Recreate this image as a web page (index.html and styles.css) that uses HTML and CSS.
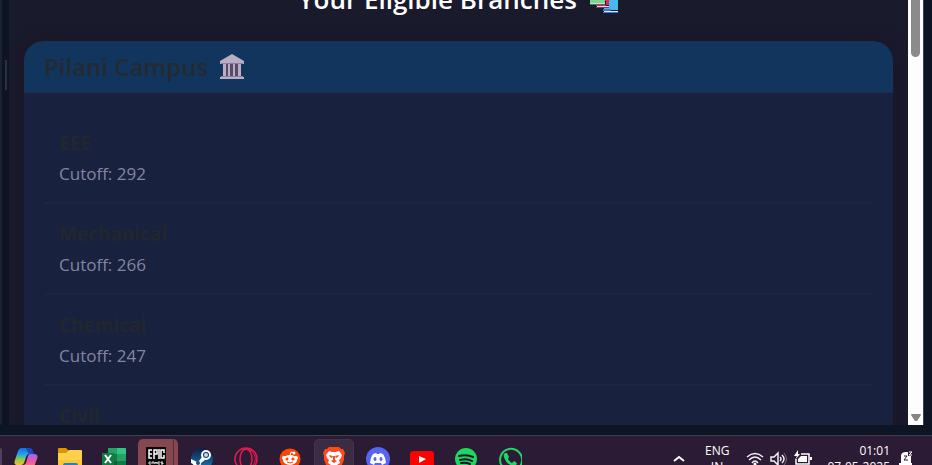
FILE: index.html
```html
<!DOCTYPE html>
<html lang="en">
<head>
<meta charset="utf-8">
<title>Your Eligible Branches</title>
<link rel="stylesheet" href="styles.css">
</head>
<body>
<div class="desktop">
  <div class="panes">
    <div class="side-pane"></div>
    <div class="splitter"><span class="grip"></span></div>
    <main class="page">
      <h1 class="title">Your Eligible Branches
        <svg class="books" viewBox="0 0 30 30" aria-hidden="true">
          <path fill="#3f9d5c" d="M2 1h16v14H2z"/><path fill="#7bd88a" d="M1 1h15v18H1z"/><path fill="#d8d0ec" d="M1 19h15v1H1z"/><path fill="#397a5c" d="M1 20h15v1H1z"/>
          <path fill="#d92b57" d="M12 5h10v16h-5v1H7v-1h10v-4h-1z"/><path fill="#e6dcf0" d="M8 22h14v1H8z"/><path fill="#a52555" d="M7 23h15v1H7z"/>
          <path fill="#48b9ee" d="M20 8h9v18H15v-2h5z"/><path fill="#e1e3fa" d="M15 27h14v1H15z"/><path fill="#4273cf" d="M14 25h8v2h-8zM14 28h15v1H14z"/>
        </svg>
      </h1>
      <section class="card">
        <h2 class="card-head">Pilani Campus
          <svg class="bank" viewBox="0 0 24 26" aria-hidden="true">
            <path fill="#574a68" d="M3 9h18v14H3z"/>
            <path fill="#b8aec3" d="M12 0 24 7v3H0V7zM3 10h3v12H3zM8 10h2v12H8zM13 10h2v12h-2zM18 10h3v12h-3zM1 22h22v1H1zM0 23h24v2H0z"/>
            <path fill="#8d8098" d="M1 9h22v1H1zM1 22h22v1H1z"/>
          </svg>
        </h2>
        <ul class="branches">
          <li class="branch"><h3 class="name">EEE</h3><p class="cutoff">Cutoff: 292</p></li>
          <li class="branch"><h3 class="name">Mechanical</h3><p class="cutoff">Cutoff: 266</p></li>
          <li class="branch"><h3 class="name">Chemical</h3><p class="cutoff">Cutoff: 247</p></li>
          <li class="branch"><h3 class="name">Civil</h3></li>
        </ul>
      </section>
    </main>
    <div class="scrollbar">
      <span class="thumb"></span>
      <svg class="arrow" viewBox="0 0 10 8" aria-hidden="true"><path fill="#858585" d="M1 0h8q1 0 1 1L6 7H4L0 1q0-1 1-1z"/></svg>
    </div>
    <div class="edge"></div>
  </div>
  <footer class="taskbar">
    <span class="search-end"></span>
    <nav class="apps">
      <button class="app" aria-label="Copilot"><svg viewBox="0 0 24 24">
        <defs><linearGradient id="ca" x1="0" y1="0" x2="0" y2="1"><stop offset="0" stop-color="#1769e8"/><stop offset=".4" stop-color="#22a9e8"/><stop offset=".65" stop-color="#8bc94a"/><stop offset="1" stop-color="#f4c22f"/></linearGradient>
        <linearGradient id="cb" x1="0" y1="0" x2="0" y2="1"><stop offset="0" stop-color="#a263f2"/><stop offset=".5" stop-color="#ee5b9c"/><stop offset="1" stop-color="#ff944d"/></linearGradient></defs>
        <path fill="url(#ca)" d="M7 1h8q2 0 3 3l1 3h-4q-2 0-3 3l-2 6q-1 2-3 2H4q-5 0-3-5L4 4q1-3 3-3z"/>
        <path fill="#164ac3" d="M12 1h4q2 0 3 3l1 3h-4q-2 0-3-3-1-3-1-3z"/>
        <path fill="url(#cb)" d="M16 7h4q5 0 3 5l-3 8q-1 3-4 3H9q-2 0-3-3l-1-2h4q2 0 3-2l2-7q1-2 2-2z"/></svg></button>
      <button class="app" aria-label="File Explorer"><svg viewBox="0 0 24 24">
        <path fill="#dc9700" d="M0 2q0-1 1-1h7l3 3v5H0z"/><path fill="#ffd04b" d="M0 6h8l3-3h12q1 0 1 1v17H0z"/><path fill="#ffc62e" d="M0 13h24v8H0z"/><path fill="#1683d9" d="M5 23v-5q0-2 2-2h11q2 0 2 2v5z"/></svg></button>
      <button class="app" aria-label="Excel"><svg viewBox="0 0 24 24">
        <path fill="#21a366" d="M6 1h9v6H6z"/><path fill="#33c481" d="M15 1h8q1 0 1 1v5h-9z"/><path fill="#107c41" d="M6 7h9v8H6z"/><path fill="#21a366" d="M15 7h9v7h-9z"/><path fill="#185c37" d="M6 14h18v9H6z"/><path fill="#107c41" d="M15 14h9v5h-9zM0 6h12v12H0z"/><path stroke="#fff" stroke-width="2" d="m3 8 6 8M9 8l-6 8"/></svg></button>
      <button class="app stacked" aria-label="Epic Games"><svg viewBox="0 0 24 24">
        <path fill="#080808" d="M2 0h20v20l-10 4-10-4z"/><path fill="none" stroke="#fff" stroke-width="1.500" d="M8 3H5v8h3M5 7h3M10 12V3h3v4h-3M15 2v10M20 6V3h-3v8h3V8"/><path fill="none" stroke="#ddd" d="M7 15H5v2h2M8 17v-2h2v2M11 17v-2l1 1 1-1v2M16 15h-2v2h2M19 15h-2v1h2v1h-2"/></svg></button>
      <button class="app" aria-label="Steam"><svg viewBox="0 0 24 24">
        <defs><linearGradient id="st" x1="0" y1="0" x2="0" y2="1"><stop offset="0" stop-color="#101d43"/><stop offset="1" stop-color="#1680b6"/></linearGradient></defs>
        <circle cx="12" cy="12" r="11" fill="url(#st)"/><circle cx="16" cy="8" r="4" fill="none" stroke="#fff" stroke-width="2"/><circle cx="16" cy="8" r="2" fill="#cdd6e4"/><path fill="#fff" d="m1 12 6 3 2-1 3-4 3 3-4 3q0 4-4 4-3 0-4-3l-2-1z"/><circle cx="8" cy="16" r="2" fill="#264c7c"/></svg></button>
      <button class="app" aria-label="Opera"><svg viewBox="0 0 24 24" fill="none" stroke="#e3194f"><circle cx="12" cy="12" r="11" stroke-width="1.500"/><ellipse cx="12" cy="12" rx="6" ry="10" stroke-width="1.500"/><path d="M9 3q7-3 11 4 3 6-1 11"/></svg></button>
      <button class="app" aria-label="Reddit"><svg viewBox="0 0 24 24">
        <circle cx="12" cy="12" r="10.500" fill="#ff4500"/><ellipse cx="12" cy="13" rx="7" ry="5" fill="#fff"/><circle cx="6" cy="11" r="2" fill="#fff"/><circle cx="18" cy="11" r="2" fill="#fff"/><path d="m12 9 1-4 3 1" fill="none" stroke="#fff"/><circle cx="16" cy="6" r="1.500" fill="#fff"/><circle cx="9" cy="12" r="1.500" fill="#ff4500"/><circle cx="15" cy="12" r="1.500" fill="#ff4500"/><path d="M9 15q3 2 6 0" fill="none" stroke="#ff4500"/></svg></button>
      <button class="app active" aria-label="Brave"><svg viewBox="0 0 24 24">
        <path fill="#ff4a1c" d="M7 0h10l2 2 2 0 2 4-1 3 0 4-3 7-7 4-7-4-3-7V9L1 6l2-4h2z"/><path fill="#fff" d="m7 4 3 1h4l3-1 3 4-1 3-2 2 1 3-6 4-6-4 1-3-2-2-1-3z"/><path fill="#ff4a1c" d="m7 8 4 1-1 2-2-1zM17 8l-4 1 1 2 2-1zM11 9h2v4l2 1-3 2-3-2 2-1z"/></svg></button>
      <button class="app" aria-label="Discord"><svg viewBox="0 0 24 24">
        <circle cx="12" cy="12" r="12" fill="#5865f2"/><path fill="#fff" d="m7 7 3-1 1 1h2l1-1 3 1q3 4 3 9l-4 2-1-2H9l-1 2-4-2q0-5 3-9z"/><ellipse cx="9" cy="12" rx="1.500" ry="2" fill="#5865f2"/><ellipse cx="15" cy="12" rx="1.500" ry="2" fill="#5865f2"/></svg></button>
      <button class="app" aria-label="YouTube"><svg viewBox="0 0 24 24"><rect y="4" width="24" height="17" rx="3" fill="#f00"/><path fill="#fff" d="m9 9 7 3-7 4z"/></svg></button>
      <button class="app" aria-label="Spotify"><svg viewBox="0 0 24 24">
        <circle cx="12" cy="12" r="11" fill="#1ed760"/><path fill="none" stroke="#181326" stroke-width="2" stroke-linecap="round" d="M5 9q8-2 14 1M6 13q7-2 12 1M7 16q5-1 9 1"/></svg></button>
      <button class="app" aria-label="WhatsApp"><svg viewBox="0 0 24 24">
        <path fill="none" stroke="#25d366" stroke-width="2" d="M4 19A11 11 0 1 1 7 22l-5 1z"/><path fill="#25d366" d="M7 6h2l2 4-1 2q2 3 4 4l2-2 3 2q-1 4-4 3-7-2-9-9-1-2 1-4z"/></svg></button>
    </nav>
    <div class="tray">
      <button class="chevron" aria-label="Show hidden icons"><svg viewBox="0 0 12 8"><path fill="none" stroke="#fff" stroke-width="2" d="m1 6 5-4 5 4"/></svg></button>
      <div class="lang">ENG<br>IN</div>
      <div class="status">
        <svg viewBox="0 0 18 18" aria-label="Wi-Fi"><path fill="none" stroke="#f4f0f5" stroke-width="1.500" d="M1 7q8-7 16 0M3 10q6-6 12 0M6 13q3-4 6 0"/><circle cx="9" cy="14" r="1.500" fill="#fff"/></svg>
        <svg viewBox="0 0 18 18" aria-label="Volume"><path fill="none" stroke="#f4f0f5" stroke-width="1.500" d="M1 7h3l4-4v12l-4-4H1zM10 7q2 2 0 4M12 5q4 4 0 8"/><path fill="none" stroke="#76687a" d="M14 3q5 6 0 12"/></svg>
        <svg viewBox="0 0 18 18" aria-label="Battery"><path fill="none" stroke="#fff" stroke-width="1.500" d="M7 4h8v10H2V9"/><path fill="#fff" d="M7 6h6v6H4V9zM16 7h2v3h-2zM4 0 0 6h3l-2 4 5-6H4z"/></svg>
      </div>
      <time class="clock">01:01<br>07-05-2025</time>
      <svg class="bell" viewBox="0 0 14 18" aria-label="Notifications"><path fill="#fff" d="M2 13V6q0-4 5-4h2v4h3v7h1v2H0v-2z"/><path fill="none" stroke="#2b1b34" d="M5 6h3l-3 4h4"/><path fill="none" stroke="#fff" d="M10 2h3l-3 3h3"/></svg>
    </div>
  </footer>
</div>
</body>
</html>
```
FILE: styles.css
```css
* { box-sizing: border-box; }

body {
  margin: 0;
  background: #0d1524;
  font-family: "Open Sans", "Noto Sans", sans-serif;
}

h1, h2, h3, p, ul { margin: 0; padding: 0; }
svg { display: block; }
button { border: 0; padding: 0; background: none; }

.desktop {
  display: flex;
  flex-direction: column;
  height: 100vh;
  overflow: hidden;
}

.panes {
  display: flex;
  flex: 1;
  min-height: 0;
  margin-bottom: 10px;
}

.side-pane {
  width: 2px;
  background: #1b212e;
  border-bottom-right-radius: 2px;
}

.splitter { width: 7px; padding: 60px 0 0 3px; }

.grip {
  display: block;
  width: 2px;
  height: 30px;
  background: #293241;
}

.page {
  flex: 1;
  min-width: 0;
  overflow: hidden;
  padding: 0 15px;
  background: #1a1a2d;
}

.title {
  display: flex;
  justify-content: center;
  align-items: center;
  gap: 12px;
  height: 40px;
  margin: -21px 0 22px;
  color: #fff;
  font-size: 26px;
  font-weight: 600;
  line-height: 40px;
  white-space: nowrap;
}

.books { width: 30px; height: 30px; }

.card {
  border-radius: 20px;
  overflow: hidden;
  background: #18213d;
  box-shadow: 0 0 16px #1b1526;
}

.card-head {
  display: flex;
  align-items: center;
  gap: 12px;
  height: 52px;
  padding: 0 20px;
  border-bottom: 1px solid #24284b;
  background: #12355e;
  color: #232a32;
  font-size: 24px;
  font-weight: 600;
}

.bank { width: 24px; height: 26px; }

.branches { padding: 20px; list-style: none; }

.branch {
  height: 91px;
  padding: 15px;
  border-bottom: 2px solid #1f2444;
}

.name {
  color: #22262d;
  font-size: 19px;
  font-weight: 700;
  line-height: 31px;
}

.cutoff {
  color: #8585a2;
  font-size: 17px;
  line-height: 30px;
}

.scrollbar {
  display: flex;
  flex-direction: column;
  justify-content: space-between;
  align-items: center;
  width: 15px;
  padding-bottom: 3px;
  background: #fdfdfd;
}

.thumb {
  width: 9px;
  height: 57px;
  border-radius: 0 0 5px 5px;
  background: #8b8b8b;
}

.arrow { width: 10px; height: 8px; }

.edge { width: 9px; border-left: 1px solid #3a414d; }

.taskbar {
  display: flex;
  justify-content: space-between;
  align-items: center;
  height: 47px;
  margin-bottom: -17px;
  flex-shrink: 0;
  padding-right: 19px;
  border-top: 1px solid #453b4f;
  background: #2b1b34;
  color: #fff;
}

.search-end {
  width: 2px;
  height: 22px;
  margin-right: 2px;
  border-radius: 0 8px 8px 0;
  background: #514257;
}

.apps { display: flex; flex: 1; }

.app {
  display: grid;
  place-items: center;
  width: 40px;
  height: 40px;
  margin: 0 2px;
  border-radius: 5px;
}

.app svg { width: 24px; height: 24px; }

.active { background: #3b2b43; border: 1px solid #44344b; }

.stacked {
  background: #86484f;
  border-right: 4px solid #87474d;
  box-shadow: inset -1px 0 #512e3e;
}

.tray {
  display: flex;
  align-items: center;
  font-size: 12px;
  line-height: 16px;
}

.chevron { width: 12px; margin-right: 20px; }

.lang { width: 24px; margin-right: 17px; text-align: center; }

.status { display: flex; gap: 6px; }

.status svg { width: 18px; height: 18px; }

.clock { width: 78px; text-align: right; }

.bell { width: 14px; height: 18px; margin-left: 9px; }
```
